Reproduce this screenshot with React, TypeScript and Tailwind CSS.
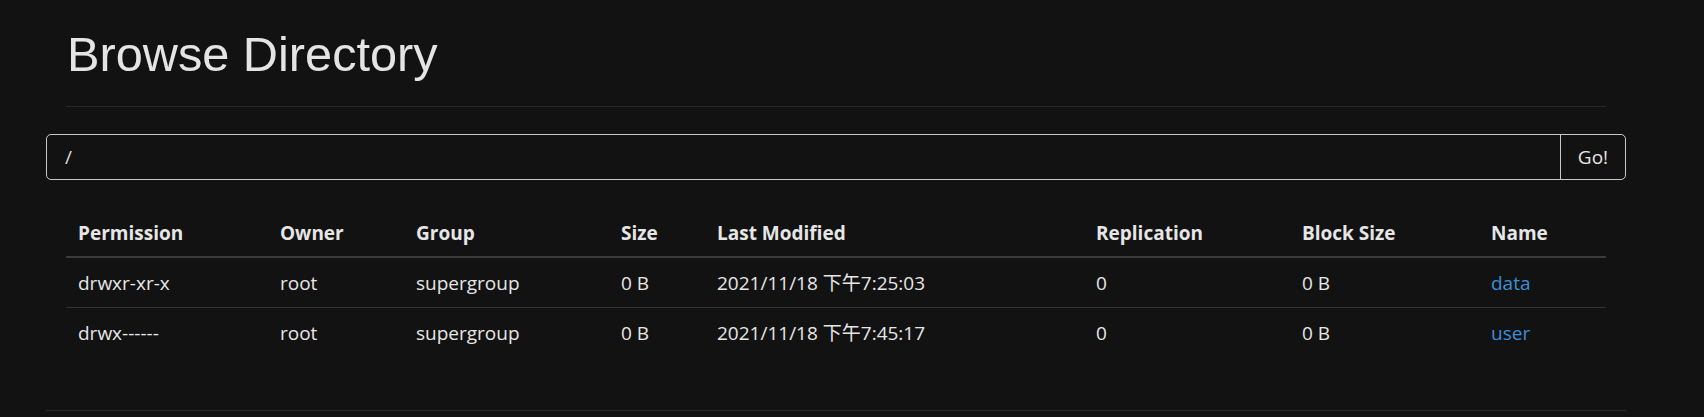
import { useState } from 'react';

type Entry = {
  permission: string;
  owner: string;
  group: string;
  size: string;
  modified: string;
  replication: string;
  blockSize: string;
  name: string;
};

const entries: Entry[] = [
  { permission: 'drwxr-xr-x', owner: 'root', group: 'supergroup', size: '0 B', modified: '2021/11/18 下午7:25:03', replication: '0', blockSize: '0 B', name: 'data' },
  { permission: 'drwx------', owner: 'root', group: 'supergroup', size: '0 B', modified: '2021/11/18 下午7:45:17', replication: '0', blockSize: '0 B', name: 'user' },
];

const columns = [
  { label: 'Permission', width: 'w-[202px]' },
  { label: 'Owner', width: 'w-[136px]' },
  { label: 'Group', width: 'w-[205px]' },
  { label: 'Size', width: 'w-[96px]' },
  { label: 'Last Modified', width: 'w-[379px]' },
  { label: 'Replication', width: 'w-[206px]' },
  { label: 'Block Size', width: 'w-[189px]' },
  { label: 'Name', width: 'w-[127px]' },
];

const bodyFont = "font-['Open_Sans','Noto_Sans_CJK_SC',sans-serif]";

export default function App() {
  const [path, setPath] = useState('/');

  return (
    <div className={`bg-[#121212] min-h-[417px] w-full text-[#e6e6e6] ${bodyFont}`}>
      <div className="ml-[46px] w-[1580px] pt-[28px]">
        <div className="mx-[20px]">
          <h1 className="font-['Liberation_Sans',Arial,sans-serif] text-[48.7px] leading-[53px] font-normal text-[#e4e4e4] pl-[1px]">Browse Directory</h1>
          <div className="mt-[25px] h-px bg-[#272727]" />
        </div>

        <div className="mt-[27px] flex h-[46px] border border-[#c8c8c8] rounded-[5px]">
          <input
            value={path}
            onChange={e => setPath(e.target.value)}
            className="flex-1 bg-transparent outline-none pl-[18px] text-[19px] text-[#dcdcdc]"
          />
          <button className="w-[65px] border-l border-[#c8c8c8] text-[19px] text-[#e6e6e6]">Go!</button>
        </div>

        <div className="mx-[20px] mt-[27px]">
          <table className="table-fixed w-[1540px] border-collapse text-[19px] leading-[26px]">
            <thead>
              <tr>
                {columns.map(c => (
                  <th key={c.label} className={`${c.width} h-[50px] px-[12px] pt-[2px] text-left font-bold border-b-2 border-[#3a3a3a]`}>{c.label}</th>
                ))}
              </tr>
            </thead>
            <tbody>
              {entries.map((e, i) => (
                <tr key={e.name} className={i > 0 ? 'border-t border-[#333333]' : ''}>
                  <td className="h-[50px] px-[12px] pt-[2px]">{e.permission}</td>
                  <td className="px-[12px] pt-[2px]">{e.owner}</td>
                  <td className="px-[12px] pt-[2px]">{e.group}</td>
                  <td className="px-[12px] pt-[2px]">{e.size}</td>
                  <td className="px-[12px] pt-[2px]">{e.modified}</td>
                  <td className="px-[12px] pt-[2px]">{e.replication}</td>
                  <td className="px-[12px] pt-[2px]">{e.blockSize}</td>
                  <td className="px-[12px] pt-[2px]"><a href="#" className="text-[#3b8fd9]">{e.name}</a></td>
                </tr>
              ))}
            </tbody>
          </table>
        </div>

        <div className="mt-[53px] h-px bg-[#2a2a2a]" />
      </div>
    </div>
  );
}
